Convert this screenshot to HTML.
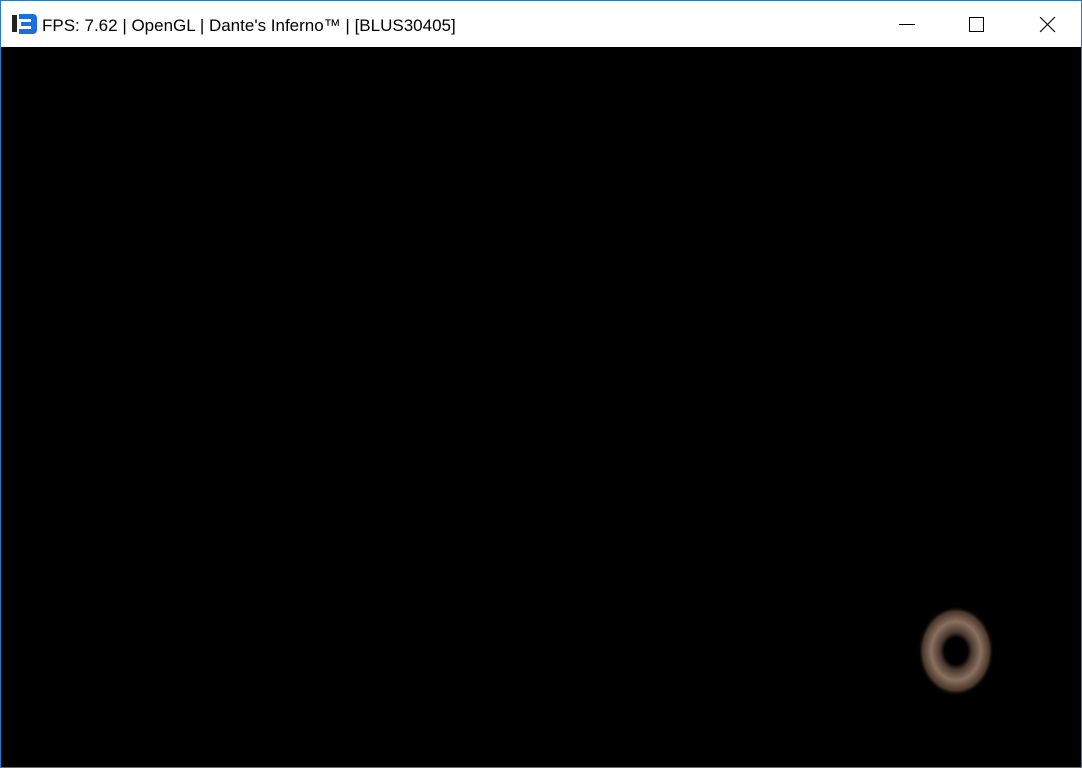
<!DOCTYPE html>
<html><head><style>
html,body{margin:0;padding:0;width:1082px;height:768px;overflow:hidden;background:#000}
.win{position:absolute;left:0;top:0;width:1080px;height:766px;border:1px solid #2b79c9;background:#000}
.tb{position:absolute;left:0;top:0;width:1080px;height:46px;background:#fff}
.t{position:absolute;left:41px;top:15px;font:17px "Liberation Sans",sans-serif;color:#000;white-space:nowrap}
</style></head><body>
<div class="win">
<div class="tb">
<svg style="position:absolute;left:11px;top:12px" width="26" height="22" viewBox="0 0 26 22">
<rect x="0" y="2" width="5" height="17" fill="#222"/>
<path d="M7 1h14a4 4 0 0 1 4 4v12a4 4 0 0 1-4 4H7v-5h12v-3H9v-4h10V6H7z" fill="#1a6fe0"/>
</svg>
<div class="t">FPS: 7.62 | OpenGL | Dante's Inferno™ | [BLUS30405]</div>
<svg style="position:absolute;left:898px;top:16px" width="160" height="16" viewBox="0 0 160 16">
<line x1="0" y1="7.5" x2="16" y2="7.5" stroke="#000" stroke-width="1"/>
<rect x="70.5" y="0.5" width="14" height="14" fill="none" stroke="#000"/>
<path d="M141 0L156 15M156 0L141 15" stroke="#000" stroke-width="1.1"/>
</svg>
</div>
<svg style="position:absolute;left:0;top:0" width="1080" height="766">
<defs><radialGradient id="g" cx="0.5" cy="0.5" r="0.5">
<stop offset="0.3" stop-color="#000"/><stop offset="0.42" stop-color="#4a382e"/><stop offset="0.65" stop-color="#8a7060"/><stop offset="0.88" stop-color="#4a3628"/><stop offset="1" stop-color="#000" stop-opacity="0"/></radialGradient></defs>
<ellipse cx="955" cy="650" rx="38" ry="45" fill="url(#g)"/>
<ellipse cx="955" cy="650" rx="12" ry="13" fill="#000"/>
</svg>
</div>
</body></html>
